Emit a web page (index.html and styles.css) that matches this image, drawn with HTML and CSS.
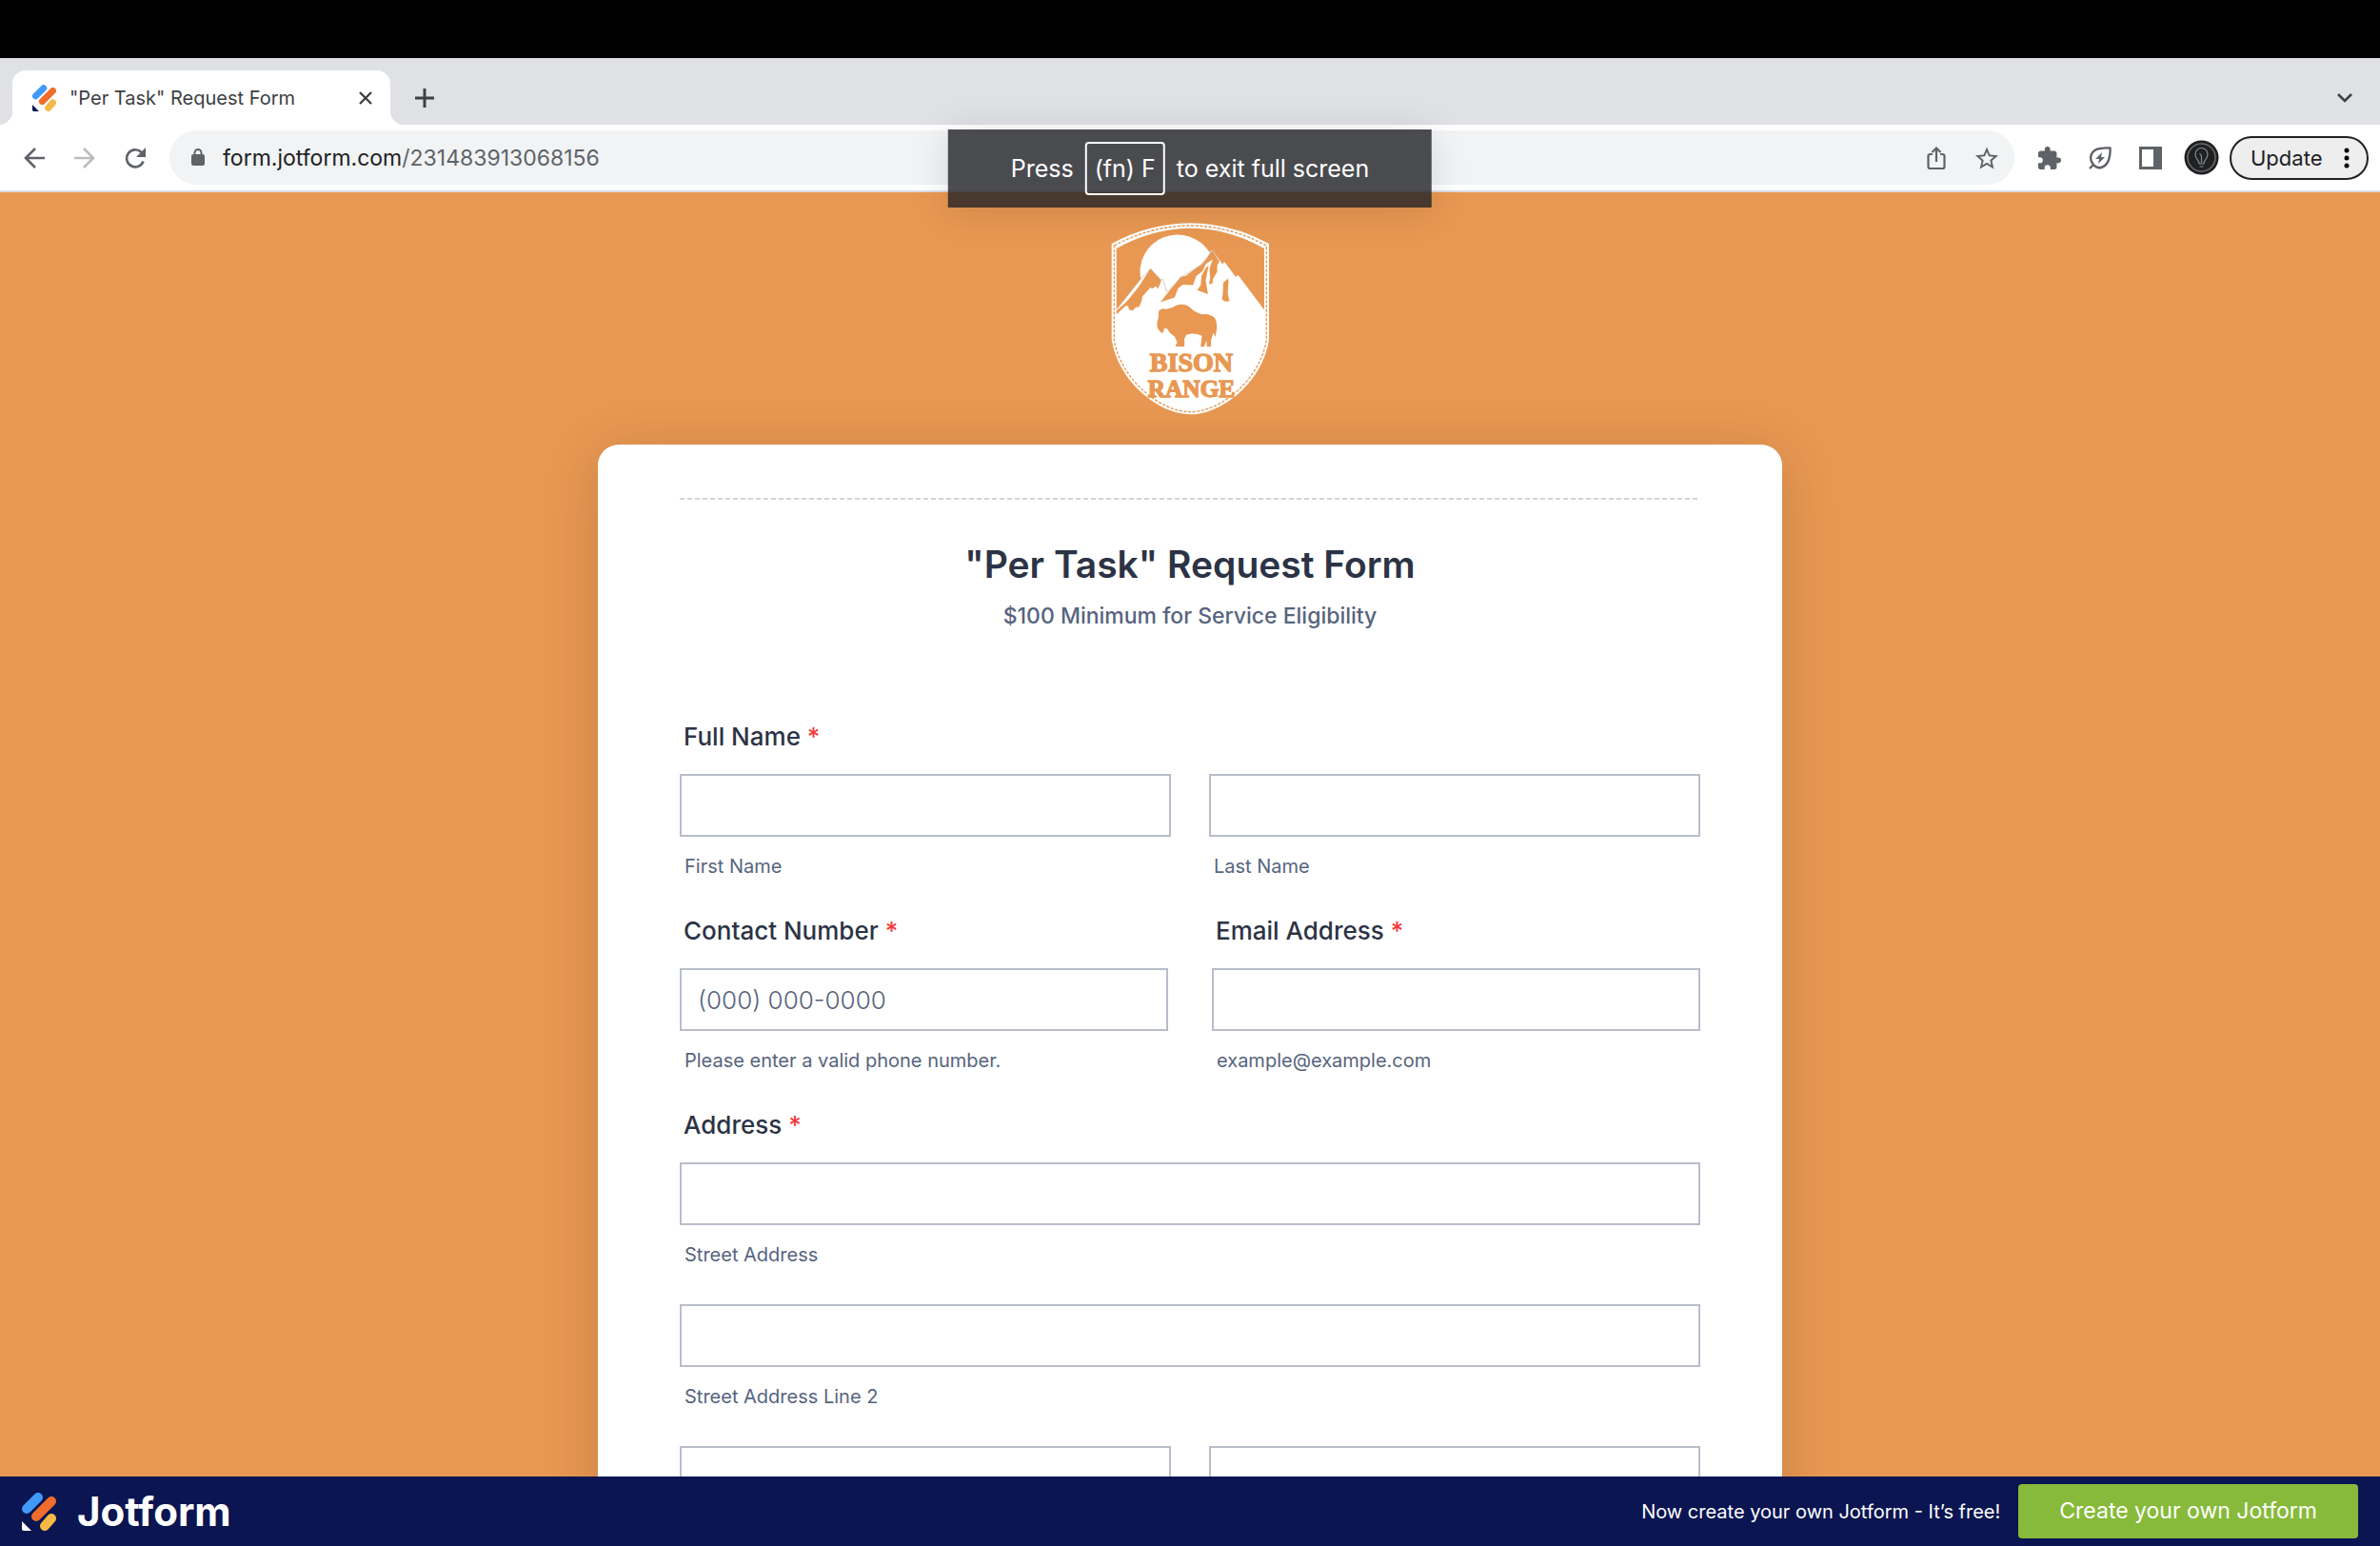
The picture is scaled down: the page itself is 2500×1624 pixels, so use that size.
FILE: index.html
```
<!DOCTYPE html>
<html lang="en">
  <head>
    <meta charset="UTF-8" />
    <meta name="viewport" content="width=device-width, initial-scale=1.0" />
    <title>"Per Task" Request Form</title>
    <link rel="stylesheet" href="styles.css">
  </head>
  <body>
    <div class="menu-strip"></div>
    <div class="tab-strip">
      <div class="tab">
        <svg class="tab-logo" viewBox="0 0 36 40">
          <path d="M5 17 17 5" stroke="#4299f9" stroke-width="10" />
          <path d="M15 25 31 9" stroke="#f06d2d" stroke-width="10" />
          <path d="M24 35 31 27" stroke="#f6b945" stroke-width="10" />
          <path d="M0 30v8q0 2 2 2h8z" fill="#0a1551" stroke="none" />
        </svg>
        <span class="tab-title">"Per Task" Request Form</span>
        <button class="icon-button" aria-label="Close tab">
          <svg width="16" height="16" viewBox="0 0 16 16"><path d="M2 2l12 12M14 2L2 14" stroke="#3c4043" stroke-width="2.4" /></svg>
        </button>
      </div>
      <button class="icon-button new-tab" aria-label="New tab">
        <svg width="20" height="20" viewBox="0 0 20 20"><path d="M10 0v20M0 10h20" stroke="#3c4043" stroke-width="3" /></svg>
      </button>
      <button class="icon-button tab-search" aria-label="Search tabs">
        <svg width="16" height="12" viewBox="0 0 16 12"><path d="M1 2l7 7 7-7" fill="none" stroke="#3c4043" stroke-width="2.6" /></svg>
      </button>
    </div>
    <div class="toolbar">
      <div class="nav-buttons">
        <button class="icon-button" aria-label="Back">
          <svg width="24" height="24" viewBox="0 0 24 24"><path d="M23 12H3M13 2L3 12l10 10" fill="none" stroke="#5f6368" stroke-width="2.6" /></svg>
        </button>
        <button class="icon-button" aria-label="Forward">
          <svg width="24" height="24" viewBox="0 0 24 24"><path d="M1 12h20M11 2l10 10-10 10" fill="none" stroke="#babcbe" stroke-width="2.6" /></svg>
        </button>
        <button class="icon-button" aria-label="Reload">
          <svg width="24" height="24" viewBox="0 0 24 24"><path d="M20.500 15.500A9 9 0 1 1 18 5.500L21 8.500" fill="none" stroke="#5f6368" stroke-width="2.600" /><path d="M23 1v10H13z" fill="#5f6368" /></svg>
        </button>
      </div>
      <div class="omnibox">
        <svg width="14" height="19" viewBox="0 0 14 19"><rect y="6" width="14" height="12" rx="2" fill="#5f6368" /><path d="M3.500 7V4.500a3.500 3.500 0 0 1 7 0V7" fill="none" stroke="#5f6368" stroke-width="2" /></svg>
        <div class="url" role="textbox" contenteditable="true" spellcheck="false" aria-label="Address bar">form.jotform.com<span class="url-path">/231483913068156</span></div>
        <button class="icon-button" aria-label="Share">
          <svg width="20" height="26" viewBox="0 0 20 26"><path d="M6 9H3.500A2 2 0 0 0 1.500 11v11a2 2 0 0 0 2 2h13a2 2 0 0 0 2-2V11a2 2 0 0 0-2-2H14M10 17V3M5.500 7L10 2.500 14.500 7" fill="none" stroke="#5f6368" stroke-width="2.200" /></svg>
        </button>
        <button class="icon-button" aria-label="Bookmark this tab">
          <svg width="24" height="24" viewBox="2 2 20 19"><path d="M22 9.240l-7.190-.620L12 2 9.190 8.630 2 9.240l5.460 4.730L5.820 21 12 17.270 18.180 21l-1.630-7.030L22 9.240zM12 15.400l-3.760 2.270 1-4.280-3.320-2.880 4.380-.380L12 6.100l1.710 4.040 4.380.380-3.320 2.880 1 4.280L12 15.400z" fill="#5f6368" /></svg>
        </button>
      </div>
      <div class="extensions">
        <button class="icon-button" aria-label="Extensions">
          <svg width="24" height="24" viewBox="2 1 21 21"><path d="M20.500 11H19V7c0-1.100-.900-2-2-2h-4V3.500a2.500 2.500 0 0 0-5 0V5H4c-1.100 0-2 .900-2 2v3.800h1.500a2.700 2.700 0 0 1 0 5.400H2V20c0 1.100.900 2 2 2h3.800v-1.500a2.700 2.700 0 0 1 5.400 0V22H17c1.100 0 2-.900 2-2v-4h1.500a2.500 2.500 0 0 0 0-5z" fill="#5f6368" /></svg>
        </button>
        <button class="icon-button" aria-label="Energy saver">
          <svg width="24" height="24" viewBox="0 0 24 24"><path d="M1 23l4-4M5 19C-1 12 3 3 12 2q6-1 10.500-.500Q23 8 21 14C18 22 10 25 5 19z" fill="none" stroke="#5f6368" stroke-width="2.400" /><path d="M14 6l-7 7h4l-1 5 7-7h-4z" fill="#5f6368" /></svg>
        </button>
        <button class="icon-button" aria-label="Side panel">
          <svg width="24" height="24" viewBox="0 0 24 24"><path d="M0 0h24v24H0zM3 3v18h12V3z" fill="#5f6368" fill-rule="evenodd" /></svg>
        </button>
      </div>
      <button class="icon-button avatar" aria-label="Profile">
        <svg width="37" height="37" viewBox="0 0 37 37"><circle cx="18.500" cy="18.500" r="18" fill="#1f2022" /><circle cx="18.500" cy="18.500" r="14.500" fill="none" stroke="#66686b" stroke-width="1.600" /><path d="M16 25c0-4-4-5-4-10a6.500 6.500 0 0 1 13 0c0 5-4 6-4 10zM16.500 28h4M18.500 24v-7l-2-3" fill="none" stroke="#8b8d90" stroke-width="1.200" /></svg>
      </button>
      <button class="update">
        Update
        <svg width="6" height="22" viewBox="0 0 6 22"><circle cx="3" cy="3" r="2.500" /><circle cx="3" cy="11" r="2.500" /><circle cx="3" cy="19" r="2.500" /></svg>
      </button>
      <div class="fullscreen-hint">Press <kbd>(fn) F</kbd> to exit full screen</div>
    </div>
    <main>
      <svg class="brand" viewBox="50 40 500 605" role="img" aria-label="Bison Range">
        <path d="M52 106Q170 42 300 41 430 42 547 106V408C528 540 400 643 300 643S72 540 52 408z" fill="#fff" />
        <path d="M60 112Q175 50 300 49 425 50 539 112V408C520 532 396 635 300 635S80 532 60 408z" class="stitch" />
        <g class="ink">
          <path d="M67 121Q180 58 300 57 420 58 532 121V314L450 205 442 210 407 163 401 170 368 125 272 208 225 258 213 217 208 222 174 183 140 222 67 314z" />
          <path d="M145 222A118 116 0 0 1 360 133L338 170 276 207 226 258 213 217 208 222 174 185z" fill="#fff" />
          <path d="M174 184l34 36-3 12-8 16-5-9-14 9-3-5-26 28-3 16-8 18-10 1-10 10-11-2-3-12-8-1-29 27v-11l33-30 36-44z" />
          <path d="M368 125l23 36-7 13v20l-14 24v12l-12 4 4-20-2-30 10-29-22 15-10 22-20 16-10 28-32-1-15 12-11 28-45 15 64-80 16-3 48-36 20-22z" />
          <path d="M357 174l-9 48 7 43-34-13 11-15 3-30 13-25z" />
          <path d="M418 215l2 10-3 37 6 24-14 2-10-7 3-20 1-32z" />
          <path d="M200 318q8-12 24-6 18-2 31-12 21-8 40 3 14 17 40 25 30-2 42 12 7 12 6 32l-5 28-6-15-7 24-1 21h-12l-2-20-7 20h-11l4-34q-25-12-49-3l-6 12v24h-29l6-12-8-20q-14-5-22-22l-6-3q-7 0-6 8l-5 8q-11-8-15-18-3-18 3-30z" />
        </g>
        <path d="M68 312L140 222 174 184 208 222 213 217 226 258 276 207 338 170 368 125 392 162" class="ridge" />
        <text x="303" y="506" class="brand-text brand-bison">BISON</text>
        <text x="303" y="588" class="brand-text brand-range">RANGE</text>
      </svg>
      <form class="card">
        <hr>
        <h1>"Per Task" Request Form</h1>
        <p class="subtitle">$100 Minimum for Service Eligibility</p>

        <div class="group" role="group" aria-labelledby="name-label">
          <div class="label" id="name-label">Full Name <span class="required">*</span></div>
          <div class="row">
            <div class="field">
              <input type="text" id="first-name">
              <label class="caption" for="first-name">First Name</label>
            </div>
            <div class="field">
              <input type="text" id="last-name">
              <label class="caption" for="last-name">Last Name</label>
            </div>
          </div>
        </div>

        <div class="row row-wide">
          <div class="group">
            <label class="label" for="phone">Contact Number <span class="required">*</span></label>
            <div class="field">
              <input type="tel" id="phone" placeholder="(000) 000-0000">
              <span class="caption">Please enter a valid phone number.</span>
            </div>
          </div>
          <div class="group">
            <label class="label" for="email">Email Address <span class="required">*</span></label>
            <div class="field">
              <input type="email" id="email">
              <span class="caption">example@example.com</span>
            </div>
          </div>
        </div>

        <div class="group" role="group" aria-labelledby="address-label">
          <div class="label" id="address-label">Address <span class="required">*</span></div>
          <div class="field">
            <input type="text" id="street">
            <label class="caption" for="street">Street Address</label>
          </div>
          <div class="field">
            <input type="text" id="street-2">
            <label class="caption" for="street-2">Street Address Line 2</label>
          </div>
          <div class="row">
            <div class="field"><input type="text" aria-label="City"></div>
            <div class="field"><input type="text" aria-label="State / Province"></div>
          </div>
        </div>
      </form>
    </main>
    <footer>
      <a class="footer-brand" href="#">
        <svg class="footer-logo" viewBox="0 0 36 40">
          <path d="M5 17 17 5" stroke="#4299f9" stroke-width="10" />
          <path d="M15 25 31 9" stroke="#f06d2d" stroke-width="10" />
          <path d="M24 35 31 27" stroke="#f6b945" stroke-width="10" />
          <path d="M0 30v8q0 2 2 2h8z" fill="#fff" stroke="none" />
        </svg>
        Jotform
      </a>
      <span class="footer-note">Now create your own Jotform - It’s free!</span>
      <a class="footer-button" href="#">Create your own Jotform</a>
    </footer>
  </body>
</html>
```
FILE: styles.css
```
* {
  box-sizing: border-box;
  margin: 0;
}
body {
  display: flex;
  flex-direction: column;
  height: 100vh;
  overflow: hidden;
  font-family: Inter, "Liberation Sans", sans-serif;
  background-color: #e89852;
}
button {
  font-family: inherit;
  cursor: pointer;
}
svg {
  display: block;
  flex: none;
}
.icon-button {
  display: flex;
  padding: 0;
  border: 0;
  background: none;
}

/* browser chrome */
.menu-strip {
  flex: none;
  height: 61px;
  background-color: #000;
}
.tab-strip {
  flex: none;
  display: flex;
  align-items: center;
  height: 70px;
  padding: 13px 29px 0 13px;
  background-color: #dfe1e5;
}
.tab {
  position: relative;
  display: flex;
  align-items: center;
  width: 397px;
  height: 57px;
  padding: 0 18px 0 21px;
  border-radius: 14px 14px 0 0;
  background-color: #fff;
}
/* curved feet of the tab */
.tab::before,
.tab::after {
  content: "";
  position: absolute;
  bottom: 0;
  width: 14px;
  height: 14px;
}
.tab::before {
  right: 100%;
  background: radial-gradient(circle at 0 0, #dfe1e5 14px, #fff 14px);
}
.tab::after {
  left: 100%;
  background: radial-gradient(circle at 100% 0, #dfe1e5 14px, #fff 14px);
}
.tab-logo,
.footer-logo {
  fill: none;
  stroke-linecap: round;
}
.tab-logo {
  width: 25px;
  height: 28px;
  margin-right: 14px;
}
.tab-title {
  flex: 1;
  font-size: 20px;
  color: #3c4043;
}
.new-tab {
  margin-left: 26px;
}
.tab-search {
  margin-left: auto;
}
.toolbar {
  position: relative;
  flex: none;
  display: flex;
  align-items: center;
  height: 71px;
  padding: 0 12px 0 24px;
  border-bottom: 2px solid #dadce0;
  background-color: #fff;
}
.nav-buttons {
  display: flex;
  gap: 29px;
  margin-right: 24px;
}
.omnibox {
  flex: 1;
  display: flex;
  align-items: center;
  gap: 31px;
  height: 57px;
  padding: 0 17px 0 23px;
  border-radius: 29px;
  background-color: #f1f3f4;
}
.url {
  flex: 1;
  margin-left: -12px;
  font-size: 23px;
  color: #202124;
}
.url-path {
  color: #5f6368;
}
.extensions {
  display: flex;
  gap: 29px;
  margin: 0 23px 0 25px;
}
.avatar {
  margin-right: 11px;
}
.update {
  display: flex;
  align-items: center;
  justify-content: space-between;
  width: 146px;
  height: 46px;
  padding: 0 18px 0 20px;
  border: 2px solid #202124;
  border-radius: 23px;
  font-size: 22px;
  color: #202124;
  background-color: #eee;
}
.fullscreen-hint {
  position: absolute;
  top: 5px;
  left: 50%;
  display: flex;
  align-items: center;
  gap: 12px;
  height: 82px;
  padding: 0 66px;
  transform: translateX(-50%);
  font-size: 25px;
  white-space: nowrap;
  color: #fff;
  background-color: rgba(32, 33, 36, 0.8);
  box-shadow: 0 4px 40px rgba(0, 0, 0, 0.12);
}
.fullscreen-hint kbd {
  padding: 11px 8px;
  border: 2px solid #fff;
  border-radius: 4px;
  font: inherit;
}

/* form page */
main {
  flex: 1;
  display: flex;
  flex-direction: column;
  align-items: center;
  min-height: 0;
  padding-top: 32px;
  overflow: hidden;
}
.brand {
  width: 167px;
  height: 202px;
  margin-bottom: 31px;
}
.ink,
.brand-text {
  fill: #e89852;
}
.stitch {
  fill: none;
  stroke: #e89852;
  stroke-width: 4;
  stroke-dasharray: 9 5;
}
.ridge {
  fill: none;
  stroke: #c9c4b8;
  stroke-width: 2;
}
.brand-text {
  font-family: "Liberation Serif", serif;
  font-weight: 700;
  text-anchor: middle;
  stroke: #e89852;
  stroke-width: 4;
}
.brand-bison {
  font-size: 84px;
}
.brand-range {
  font-size: 76px;
}
.card {
  flex: none;
  width: 100%;
  max-width: 1244px;
  padding: 56px 86px 0;
  border-radius: 22px;
  background-color: #fff;
  box-shadow: 0 8px 60px rgba(0, 0, 0, 0.14);
}
hr {
  height: 2px;
  border: 0;
  background: repeating-linear-gradient(90deg, #d3d4dc 0 5px, #fff 5px 8px);
}
h1 {
  margin-top: 44px;
  font-size: 39px;
  font-weight: 600;
  line-height: 48px;
  text-align: center;
  color: #2c3345;
}
.subtitle {
  margin: 14px 0 95px;
  font-size: 23px;
  font-weight: 500;
  line-height: 32px;
  text-align: center;
  color: #57647e;
}
.group {
  min-width: 0;
}
.label {
  display: block;
  margin-bottom: 23px;
  padding-left: 4px;
  font-size: 26px;
  font-weight: 500;
  line-height: 32px;
  color: #2c3345;
}
.required {
  color: #f23a3c;
}
.row {
  display: grid;
  grid-template-columns: 1fr 1fr;
  gap: 40px;
}
.row-wide {
  gap: 46px;
}
.field {
  margin-bottom: 40px;
}
.field input {
  display: block;
  width: 100%;
  height: 66px;
  padding: 0 17px;
  border: 2px solid #b8bdc9;
  border-radius: 0;
  font-family: inherit;
  font-size: 26px;
  font-weight: 300;
  color: #2c3345;
  background-color: #fff;
}
.field input::placeholder {
  color: #57647e;
}
.caption {
  display: block;
  margin-top: 19px;
  padding-left: 5px;
  font-size: 20px;
  line-height: 24px;
  color: #57647e;
}

footer {
  flex: none;
  display: flex;
  align-items: center;
  height: 73px;
  padding: 0 23px;
  color: #fff;
  background-color: #0a1551;
}
footer a {
  color: inherit;
  text-decoration: none;
}
.footer-brand {
  display: flex;
  align-items: center;
  gap: 22px;
  font-size: 42px;
  font-weight: 700;
}
.footer-logo {
  width: 36px;
  height: 40px;
}
.footer-note {
  margin-left: auto;
  margin-right: 19px;
  font-size: 20px;
}
.footer-button {
  padding: 13px 43px;
  border-radius: 4px;
  font-size: 23px;
  line-height: 31px;
  background-color: #87ba3a;
}
```
